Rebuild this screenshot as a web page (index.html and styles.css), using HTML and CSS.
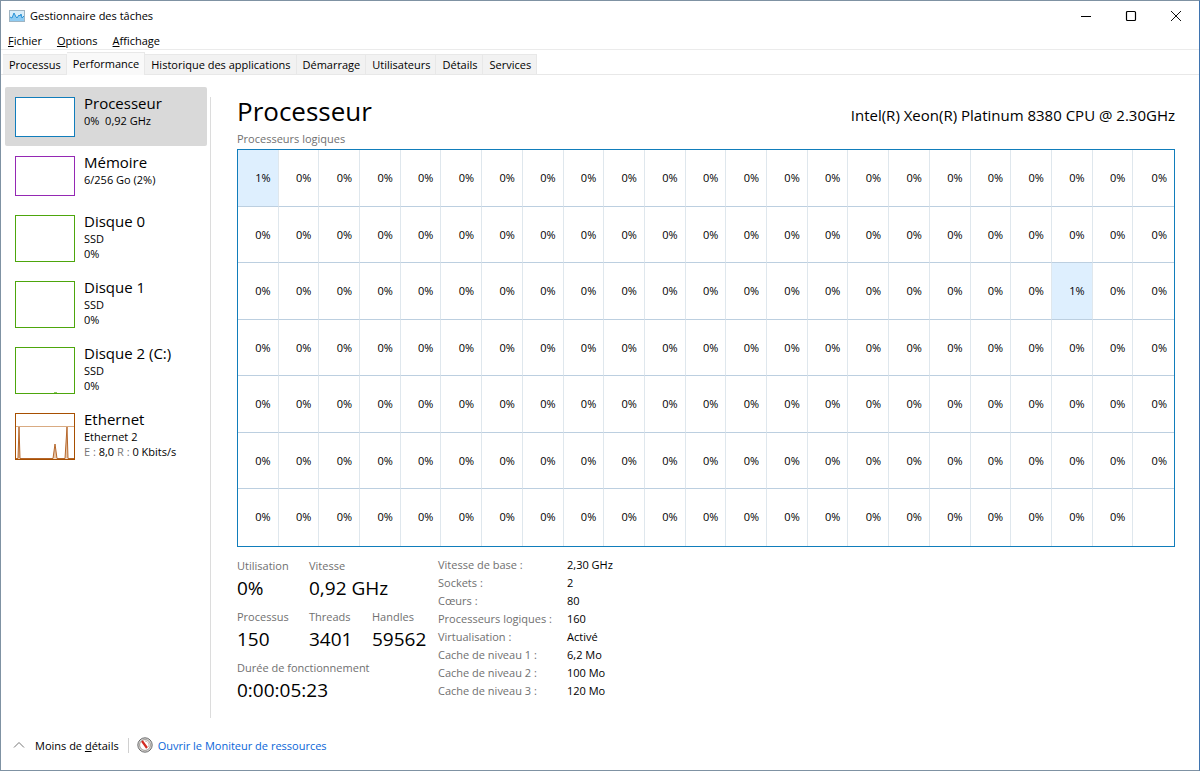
FILE: index.html
```html
<!DOCTYPE html>
<html lang="fr">
<head>
    <meta charset="UTF-8">
    <meta name="viewport" content="width=device-width, initial-scale=1.0">
    <title>Gestionnaire des tâches</title>
    <link rel="stylesheet" href="styles.css">
</head>
<body>
    <header class="titlebar">
        <svg class="appIcon" width="16" height="12" viewBox="0 0 16 12">
            <rect x="0.5" y="0.5" width="15" height="11" fill="#d9edf9" stroke="#9fb4c2"/>
            <path d="M1 11V7L3 8 5 3 7 7 8 8 10 5 11 6 12 4 13 8 15 6V11Z" fill="#8ecbf2"/>
            <path d="M1 7L3 8 5 3 7 7 8 8 10 5 11 6 12 4 13 8 15 6" fill="none" stroke="#2b93d6"/>
        </svg>
        <h1>Gestionnaire des tâches</h1>
        <div class="controls">
            <button type="button" title="Réduire"><svg width="12" height="12" viewBox="0 0 12 12"><path d="M1 6.5H11" stroke="#000"/></svg></button>
            <button type="button" title="Agrandir"><svg width="12" height="12" viewBox="0 0 12 12"><rect x="1.5" y="1.5" width="9" height="9" rx="1" fill="none" stroke="#000" stroke-width="1.2"/></svg></button>
            <button type="button" title="Fermer"><svg width="12" height="12" viewBox="0 0 12 12"><path d="M1 1L11 11M11 1L1 11" stroke="#111"/></svg></button>
        </div>
    </header>

    <nav class="menu">
        <button type="button"><u>F</u>ichier</button>
        <button type="button"><u>O</u>ptions</button>
        <button type="button"><u>A</u>ffichage</button>
    </nav>

    <div class="tabs">
        <button type="button">Processus</button>
        <button type="button" class="active">Performance</button>
        <button type="button">Historique des applications</button>
        <button type="button">Démarrage</button>
        <button type="button">Utilisateurs</button>
        <button type="button">Détails</button>
        <button type="button">Services</button>
    </div>

    <div class="content">
        <aside class="side">
            <button type="button" class="item cpu selected">
                <span class="thumb"></span>
                <span class="info"><b>Processeur</b><span>0% &nbsp;0,92 GHz</span></span>
            </button>
            <button type="button" class="item memory">
                <span class="thumb"></span>
                <span class="info"><b>Mémoire</b><span>6/256 Go (2%)</span></span>
            </button>
            <button type="button" class="item disk">
                <span class="thumb"></span>
                <span class="info"><b>Disque 0</b><span>SSD</span><span>0%</span></span>
            </button>
            <button type="button" class="item disk">
                <span class="thumb"></span>
                <span class="info"><b>Disque 1</b><span>SSD</span><span>0%</span></span>
            </button>
            <button type="button" class="item disk">
                <span class="thumb"><svg width="58" height="45" viewBox="0 0 58 45"><path d="M38 44.5H41" stroke="#8cc665"/></svg></span>
                <span class="info"><b>Disque 2 (C:)</b><span>SSD</span><span>0%</span></span>
            </button>
            <button type="button" class="item network">
                <span class="thumb"><svg width="58" height="45" viewBox="0 0 58 45">
                    <path d="M0 12.5H58" stroke="#d9ab82"/>
                    <path d="M0 44.5H2L3 13 4 44.5H37L39 30 41 44.5H49L51 13 52 44.5H58" fill="#e6c4a5" stroke="#b5662a"/>
                </svg></span>
                <span class="info"><b>Ethernet</b><span>Ethernet 2</span><span><i>E :</i> 8,0 <i>R :</i> 0 Kbits/s</span></span>
            </button>
        </aside>

        <main class="detail">
            <div class="heading">
                <h2>Processeur</h2>
                <p>Intel(R) Xeon(R) Platinum 8380 CPU @ 2.30GHz</p>
            </div>
            <p class="label">Processeurs logiques</p>
            <div class="cores"></div>

            <div class="stats">
                <div class="counters">
                    <dl><dt>Utilisation</dt><dd>0%</dd></dl>
                    <dl class="wide"><dt>Vitesse</dt><dd>0,92 GHz</dd></dl>
                    <dl><dt>Processus</dt><dd>150</dd></dl>
                    <dl><dt>Threads</dt><dd>3401</dd></dl>
                    <dl><dt>Handles</dt><dd>59562</dd></dl>
                    <dl class="full"><dt>Durée de fonctionnement</dt><dd>0:00:05:23</dd></dl>
                </div>
                <table class="specs">
                    <tr><th scope="row">Vitesse de base :</th><td>2,30 GHz</td></tr>
                    <tr><th scope="row">Sockets :</th><td>2</td></tr>
                    <tr><th scope="row">Cœurs :</th><td>80</td></tr>
                    <tr><th scope="row">Processeurs logiques :</th><td>160</td></tr>
                    <tr><th scope="row">Virtualisation :</th><td>Activé</td></tr>
                    <tr><th scope="row">Cache de niveau 1 :</th><td>6,2 Mo</td></tr>
                    <tr><th scope="row">Cache de niveau 2 :</th><td>100 Mo</td></tr>
                    <tr><th scope="row">Cache de niveau 3 :</th><td>120 Mo</td></tr>
                </table>
            </div>
        </main>
    </div>

    <footer class="footer">
        <button type="button">
            <svg width="12" height="8" viewBox="0 0 12 8"><path d="M1 6.5L6 1.5 11 6.5" fill="none" stroke="#777"/></svg>
            <span>Moins de <u>d</u>étails</span>
        </button>
        <a href="#">
            <svg width="16" height="16" viewBox="0 0 16 16">
                <circle cx="8" cy="8" r="7.2" fill="#d8d8d8" stroke="#6d6d6d"/>
                <circle cx="8" cy="8" r="5.4" fill="#fff" stroke="#a09a94"/>
                <path d="M8 4A4 4 0 0 1 11.5 10" fill="none" stroke="#c9b7ad"/>
                <path d="M5 4L10 11" stroke="#d42a20" stroke-width="2.2"/>
            </svg>
            <span>Ouvrir le Moniteur de ressources</span>
        </a>
    </footer>

    <script>
        //160 processeurs logiques, 23 par ligne
        var total = 160;
        var busy = {0: 1, 66: 1}; //index : charge en %
        var cores = document.querySelector(".cores");

        var tag = "";
        for(var i=0;i<total;i++){
            var load = busy[i] || 0;
            tag += '<div class="core' + (load > 0 ? ' busy' : '') + '">' + load + '%</div>';
        }
        tag += '<div class="core"></div>';
        cores.innerHTML = tag;
    </script>
</body>
</html>
```
FILE: styles.css
```css
*{padding: 0; margin: 0; box-sizing: border-box;}
body{display: flex; flex-direction: column; min-height: 100vh; background: #fff; color: #000; border: 1px solid #7f92a3; border-right-color: #3f74b0; font: 11px/15px "Open Sans", "Noto Sans", sans-serif;}
button{background: none; border: 0; font: inherit; color: inherit; text-align: left;}
svg{display: block;}
u{text-underline-offset: 1px;}

.titlebar{display: flex; align-items: center; height: 29px; padding-left: 8px;}
.titlebar h1{font-size: 11px; font-weight: 400; margin-left: 5px;}
.controls{display: flex; margin-left: auto; padding-right: 1px;}
.controls button{display: flex; align-items: center; justify-content: center; width: 45px; height: 28px;}

.menu{display: flex; gap: 15px; height: 20px; padding: 3px 7px 1px; border-bottom: 1px solid #ebebeb;}

.tabs{display: flex; align-items: flex-end; height: 25px; padding-left: 2px; border-bottom: 1px solid #e8e8e8;}
.tabs button{height: 20px; padding: 0 5px 0 6px; background: #f2f2f2; border: 1px solid #e8e8e8; border-left: 0; border-bottom: 0; white-space: nowrap;}
.tabs .active{height: 23px; margin-bottom: -1px; padding-bottom: 2px; background: #f9f9f9;}

.content{display: flex; flex: 1;}
.side{width: 209px; padding: 12px 3px 0 4px;}
.item{display: flex; align-items: flex-start; width: 100%; padding: 10px 10px 9px; border-radius: 2px;}
.item.selected{background: #d9d9d9;}
.thumb{width: 60px; height: 40px; margin-right: 9px; background: #fff; border: 1px solid #117dbb;}
.memory .thumb{border-color: #9528b4;}
.disk .thumb{height: 47px; border-color: #4da60c;}
.network .thumb{height: 47px; border-color: #a74f01;}
.info{display: flex; flex-direction: column; margin-top: -4px; white-space: nowrap;}
.info b{font-size: 15px; line-height: 20px; font-weight: 400;}
.info i{font-style: normal; color: #767676;}

.detail{flex: 1; position: relative; padding: 18px 24px 0 27px;}
.detail::before{content: ""; position: absolute; left: 0; top: 22px; bottom: 0; border-left: 1px solid #dcdcdc;}
.heading{display: flex; justify-content: space-between; align-items: baseline;}
.heading h2{font-size: 26px; line-height: 36px; font-weight: 400;}
.heading p{font-size: 15px;}
.label{color: #707070; line-height: 20px;}

.cores{display: grid; grid-template-columns: repeat(23, 1fr); grid-auto-rows: 1fr; height: 398px; border: 1px solid #117dbb;}
.core{padding-right: 7px; border-right: 1px solid #dfe7ed; border-bottom: 1px solid #bccfe0; text-align: right; line-height: 55px;}
.core:nth-child(23n){border-right: 0;}
.core:nth-child(n+139){border-bottom: 0;}
.core.busy{background: #deeffe;}

.stats{display: flex; padding-top: 11px;}
.counters{display: grid; grid-template-columns: 72px 63px 66px; align-content: start; row-gap: 6px;}
.counters .wide{grid-column: span 2;}
.counters .full{grid-column: span 3;}
.counters dt{color: #707070;}
.counters dd{font-size: 19px; line-height: 30px;}
.specs{border-collapse: collapse; align-self: flex-start; margin-top: -2px;}
.specs th{width: 129px; font-weight: 400; text-align: left; color: #707070;}
.specs td, .specs th{line-height: 18px; white-space: nowrap;}

.footer{display: flex; align-items: center; height: 52px; padding: 2px 0 0 12px;}
.footer button{display: flex; align-items: center; gap: 10px; padding-right: 9px; border-right: 1px solid #d0d0d0;}
.footer a{display: flex; align-items: center; gap: 5px; margin-left: 8px; color: #0a66d8; text-decoration: none;}
```
